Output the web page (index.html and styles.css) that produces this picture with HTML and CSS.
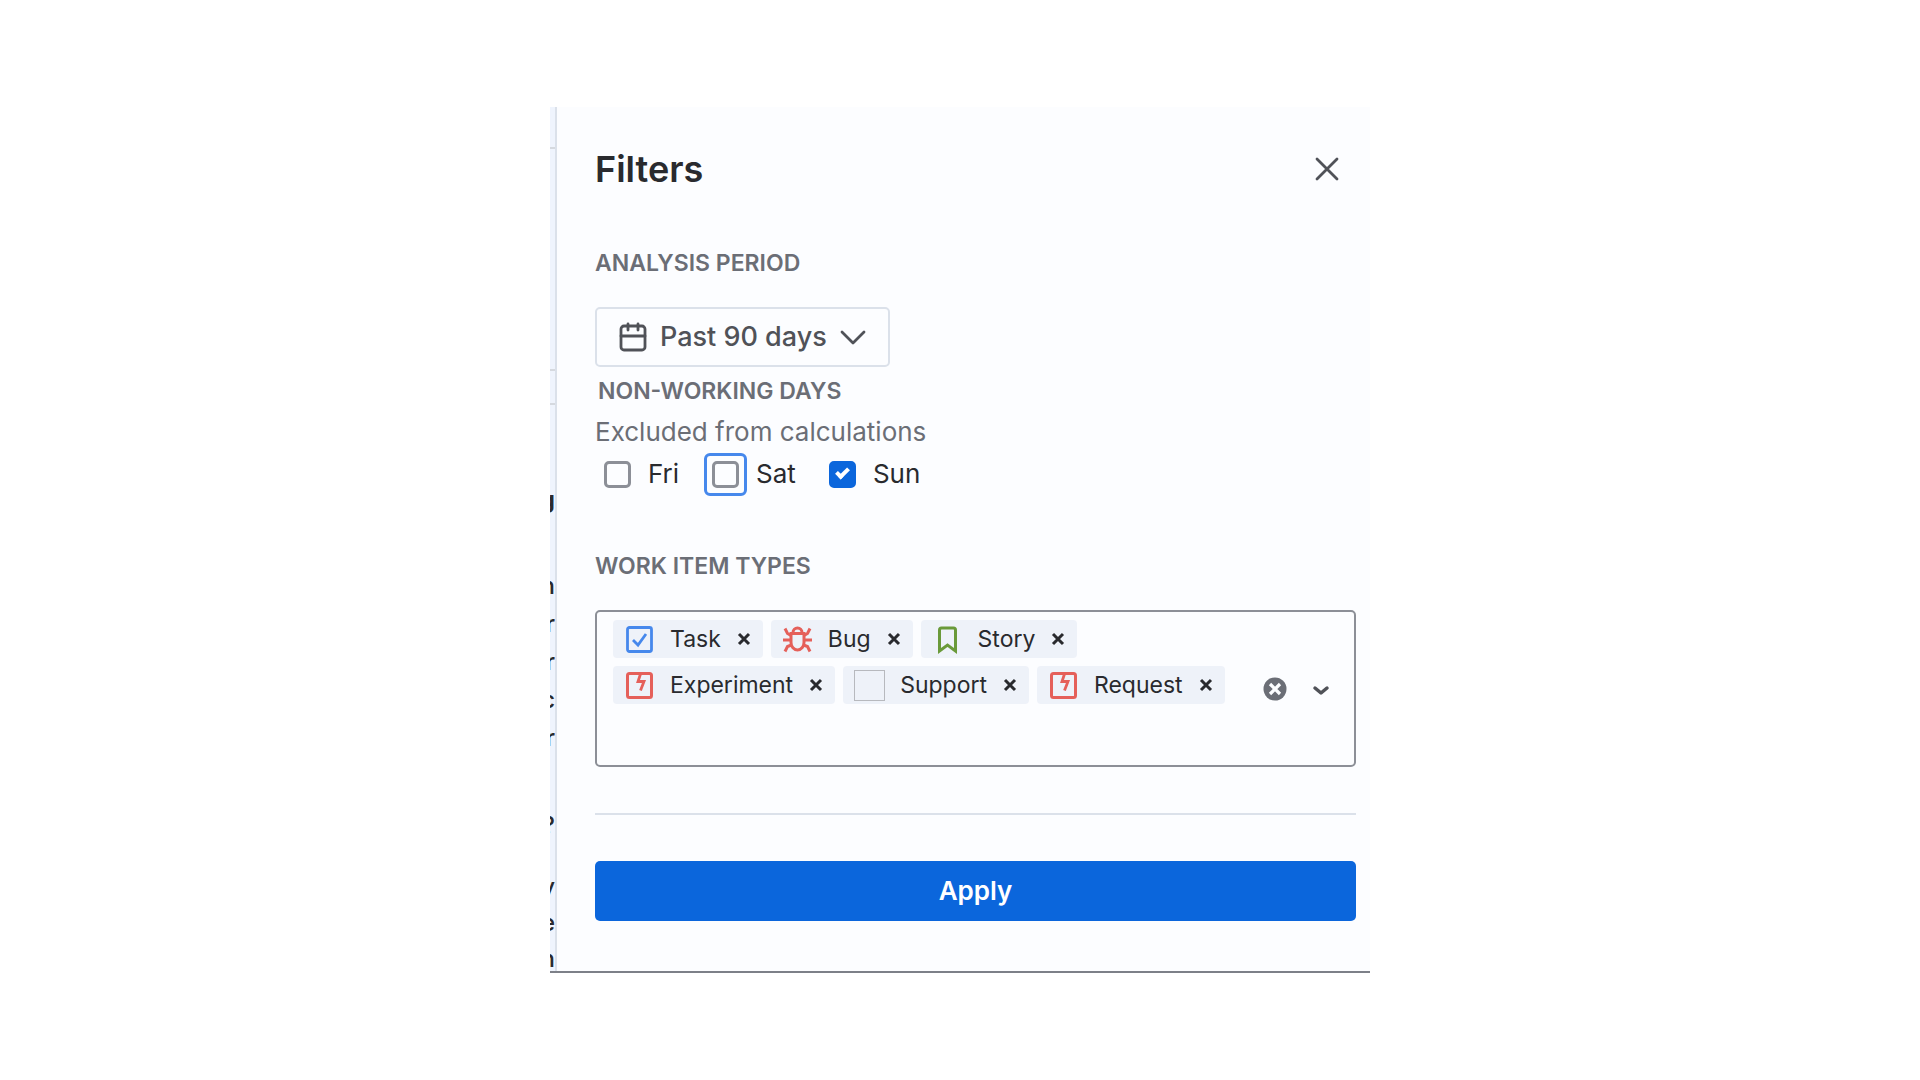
FILE: index.html
```html
<!DOCTYPE html>
<html lang="en">
<head>
    <meta charset="UTF-8">
    <meta name="viewport" content="width=device-width, initial-scale=1.0">
    <title>Filters</title>
    <link rel="stylesheet" href="styles.css">
</head>
<body>
    <!-- shared icons -->
    <svg class="sprite" aria-hidden="true">
        <symbol id="icon-remove" viewBox="0 0 14 14">
            <path d="M2 2l10 10M12 2L2 12" fill="none" stroke="currentColor" stroke-width="3"/>
        </symbol>
        <symbol id="icon-broken" viewBox="0 0 31 31">
            <rect x="3.5" y="3.5" width="24" height="24" rx="2" fill="none" stroke="#e5605a" stroke-width="3"/>
            <path d="M16.500 4l-2.500 7.500h6l-3.500 9" fill="none" stroke="#e5605a" stroke-width="2.800"/>
        </symbol>
    </svg>

    <main class="window">
        <aside class="page-edge" aria-hidden="true">
            <hr class="edge-line">
            <hr class="edge-line edge-line-far">
            <hr class="edge-line edge-line-near">
            <p class="edge-heading">g</p>
            <p>n</p>
            <p>r</p>
            <p>r</p>
            <p>c</p>
            <p>r</p>
            <p class="edge-question">?</p>
            <p class="edge-last">y</p>
            <p class="edge-last">e</p>
            <p class="edge-last">n</p>
        </aside>

        <form class="panel" onsubmit="return false">
            <header class="panel-header">
                <h1>Filters</h1>
                <button class="close" type="button" aria-label="Close">
                    <svg width="24" height="24" viewBox="0 0 24 24" fill="none" stroke="currentColor" stroke-width="2.800" stroke-linecap="round">
                        <path d="M2 2l20 20M22 2L2 22"/>
                    </svg>
                </button>
            </header>

            <label class="section-title" for="period">ANALYSIS PERIOD</label>
            <div class="period">
                <svg width="28" height="30" viewBox="0 0 28 30" fill="none" stroke="currentColor" stroke-width="2.800" stroke-linecap="round">
                    <rect x="2" y="4" width="24" height="24" rx="3"/>
                    <path d="M2 14h24M9 2v6M19 2v6"/>
                </svg>
                <select id="period">
                    <option>Past 90 days</option>
                    <option>Past 60 days</option>
                    <option>Past 30 days</option>
                </select>
                <svg class="period-arrow" width="26" height="16" viewBox="0 0 26 16" fill="none" stroke="currentColor" stroke-width="2.800" stroke-linecap="round" stroke-linejoin="round">
                    <path d="M2 3l11 11L24 3"/>
                </svg>
            </div>

            <fieldset class="days">
                <legend class="section-title">NON-WORKING DAYS</legend>
                <p class="hint">Excluded from calculations</p>
                <div class="day-list">
                    <label><input type="checkbox" name="fri">Fri</label>
                    <label><input class="focused" type="checkbox" name="sat">Sat</label>
                    <label><input type="checkbox" name="sun" checked>Sun</label>
                </div>
            </fieldset>

            <label class="section-title" for="types">WORK ITEM TYPES</label>
            <div class="multi-select">
                <div class="chips">
                    <span class="chip">
                        <svg class="chip-icon" viewBox="0 0 31 31" fill="none" stroke="#4688ec">
                            <rect x="3.500" y="3.500" width="24" height="24" rx="2" stroke-width="2.800"/>
                            <path d="M9 16l5 5 8-11" stroke-width="2.800"/>
                        </svg>
                        Task
                        <button type="button" aria-label="Remove Task"><svg><use href="#icon-remove"/></svg></button>
                    </span>
                    <span class="chip">
                        <svg class="chip-icon" viewBox="0 0 31 31" fill="none" stroke="#e5605a" stroke-width="3">
                            <path d="M9 9.500h13v9a6.500 7.500 0 0 1-13 0z"/>
                            <path d="M11 9.500v-1a4.500 4.500 0 0 1 9 0v1"/>
                            <path d="M1 16h8M22 16h8M3 4.500l2.500 5L9 11.500M28 4.500l-2.500 5L22 11.500M3 27.500l2.500-5L9.500 21M28 27.500l-2.500-5L21.500 21"/>
                        </svg>
                        Bug
                        <button type="button" aria-label="Remove Bug"><svg><use href="#icon-remove"/></svg></button>
                    </span>
                    <span class="chip">
                        <svg class="chip-icon" viewBox="0 0 31 31" fill="none" stroke="#6a9a3a" stroke-width="3">
                            <path d="M7.500 27V6a2 2 0 0 1 2-2h12a2 2 0 0 1 2 2v21l-8-6z"/>
                        </svg>
                        Story
                        <button type="button" aria-label="Remove Story"><svg><use href="#icon-remove"/></svg></button>
                    </span>
                    <span class="chip">
                        <svg class="chip-icon"><use href="#icon-broken"/></svg>
                        Experiment
                        <button type="button" aria-label="Remove Experiment"><svg><use href="#icon-remove"/></svg></button>
                    </span>
                    <span class="chip">
                        <span class="chip-icon chip-icon-empty"></span>
                        Support
                        <button type="button" aria-label="Remove Support"><svg><use href="#icon-remove"/></svg></button>
                    </span>
                    <span class="chip">
                        <svg class="chip-icon"><use href="#icon-broken"/></svg>
                        Request
                        <button type="button" aria-label="Remove Request"><svg><use href="#icon-remove"/></svg></button>
                    </span>
                    <input id="types" type="text" autocomplete="off">
                </div>
                <div class="indicators">
                    <button type="button" aria-label="Clear all">
                        <svg width="24" height="24" viewBox="0 0 24 24">
                            <circle cx="12" cy="12" r="11.500" fill="#6b6e76"/>
                            <path d="M7 7l10 10M17 7L7 17" stroke="#fcfdff" stroke-width="3.200"/>
                        </svg>
                    </button>
                    <button type="button" aria-label="Open list">
                        <svg width="18" height="24" viewBox="0 0 18 24" fill="none" stroke="#505258" stroke-width="3.500" stroke-linecap="round" stroke-linejoin="round">
                            <path d="M3 11l6 5 6-5"/>
                        </svg>
                    </button>
                </div>
            </div>

            <hr class="divider">
            <button class="apply" type="submit">Apply</button>
        </form>
    </main>
</body>
</html>
```

FILE: styles.css
```css
* {
    margin: 0;
    padding: 0;
    box-sizing: border-box;
}

body {
    font-family: Inter, "Liberation Sans", sans-serif;
    font-size: 26px;
    line-height: 32px;
    background: #fff;
    color: #292a2e;
    min-height: 100vh;
    display: flex;
    justify-content: center;
    align-items: center;
}

button,
input,
select {
    font: inherit;
    color: inherit;
    background: none;
    border: none;
}

button {
    cursor: pointer;
}

svg {
    display: block;
    flex-shrink: 0;
}

.sprite {
    position: absolute;
    width: 0;
    height: 0;
}

.window {
    display: flex;
    width: 100%;
    max-width: 820px;
    background: #fcfdff;
    border-bottom: 2px solid #7d8088;
}

/* sliver of the page behind the drawer */
.page-edge {
    flex: 0 0 7px;
    display: flex;
    flex-direction: column;
    align-items: flex-end;
    overflow: hidden;
    background: #eff4fd;
    border-right: 2px solid #dbe1ea;
    font-size: 24px;
    line-height: 38px;
    font-weight: 500;
}

.edge-line {
    width: 100%;
    border: none;
    border-top: 2px solid #d5d9df;
    margin-top: 40px;
}

.edge-line-far {
    margin-top: 220px;
}

.edge-line-near {
    margin-top: 32px;
}

.edge-heading {
    font-weight: 700;
    margin: 76px 0 48px;
}

.edge-question {
    margin: 50px 0 24px;
}

.edge-last {
    line-height: 36px;
}

.edge-last:last-child {
    margin-bottom: -20px;
}

.panel {
    flex: 1;
    min-width: 0;
    display: flex;
    flex-direction: column;
    padding: 40px 14px 50px 38px;
}

.panel-header {
    display: flex;
    justify-content: space-between;
    align-items: center;
    padding-right: 17px;
    margin-bottom: 56px;
}

h1 {
    font-size: 36px;
    line-height: 44px;
    font-weight: 600;
}

.close {
    color: #505258;
}

.section-title {
    font-size: 23px;
    line-height: 32px;
    font-weight: 600;
    color: #6b6e76;
}

.period {
    align-self: flex-start;
    display: flex;
    align-items: center;
    gap: 13px;
    height: 60px;
    padding: 0 22px;
    margin-top: 28px;
    border: 2px solid #dbe1ea;
    border-radius: 5px;
    color: #505258;
    font-size: 27px;
    font-weight: 500;
}

.period select {
    appearance: none;
    outline: none;
}

.period-arrow {
    pointer-events: none;
}

.days {
    border: none;
    margin: 8px 0 60px;
}

.days legend {
    padding-left: 3px;
}

.hint {
    color: #6b6e76;
    margin-top: 9px;
}

.day-list {
    display: flex;
    gap: 33px;
    padding-left: 9px;
    margin-top: 10px;
}

.day-list label {
    display: flex;
    align-items: center;
    gap: 17px;
}

.day-list input {
    appearance: none;
    position: relative;
    width: 27px;
    height: 27px;
    border: 3px solid #8c8f97;
    border-radius: 5px;
}

/* focus ring */
.day-list .focused::after {
    content: "";
    position: absolute;
    inset: -11px;
    border: 3px solid #4688ec;
    border-radius: 6px;
}

.day-list input:checked {
    display: grid;
    place-items: center;
    border-color: #0b66dc;
    background: #0b66dc;
}

.day-list input:checked::before {
    content: "";
    width: 9px;
    height: 4px;
    border: solid #fff;
    border-width: 0 0 4px 4px;
    transform: translateY(-2px) rotate(-45deg);
}

.multi-select {
    display: flex;
    align-items: center;
    margin-top: 28px;
    padding: 8px 24px 8px 16px;
    border: 2px solid #8c8f97;
    border-radius: 5px;
}

.chips {
    flex: 1;
    display: flex;
    flex-wrap: wrap;
    gap: 8px;
}

.chips input {
    flex: 1 0 100%;
    min-width: 0;
    height: 45px;
    outline: none;
}

.chip {
    display: flex;
    align-items: center;
    height: 38px;
    padding: 0 12px 0 11px;
    border-radius: 4px;
    background: #eef2f9;
    font-size: 23px;
}

.chip-icon {
    width: 31px;
    height: 31px;
    margin-right: 15px;
}

.chip-icon-empty {
    border: 1px solid #b7b9be;
}

.chip button {
    margin-left: 16px;
}

.chip button svg {
    width: 14px;
    height: 14px;
}

.indicators {
    display: flex;
    gap: 25px;
}

.divider {
    border: none;
    border-top: 2px solid #dbe1ea;
    margin: 46px 0;
}

.apply {
    height: 60px;
    border-radius: 5px;
    background: #0b66dc;
    color: #fff;
    font-weight: 600;
}
```
